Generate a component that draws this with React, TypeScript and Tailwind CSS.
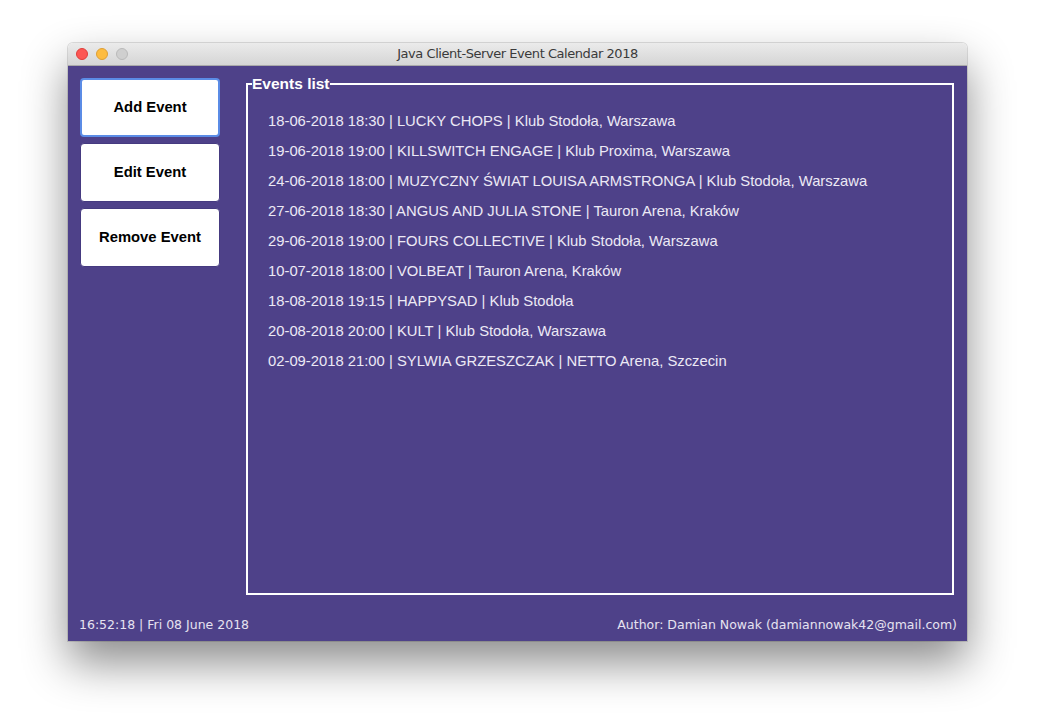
import React from 'react';

// Events shown in the list (static data from the server snapshot)
const events: string[] = [
  '18-06-2018 18:30 | LUCKY CHOPS | Klub Stodoła, Warszawa',
  '19-06-2018 19:00 | KILLSWITCH ENGAGE | Klub Proxima, Warszawa',
  '24-06-2018 18:00 | MUZYCZNY ŚWIAT LOUISA ARMSTRONGA | Klub Stodoła, Warszawa',
  '27-06-2018 18:30 | ANGUS AND JULIA STONE | Tauron Arena, Kraków',
  '29-06-2018 19:00 | FOURS COLLECTIVE | Klub Stodoła, Warszawa',
  '10-07-2018 18:00 | VOLBEAT | Tauron Arena, Kraków',
  '18-08-2018 19:15 | HAPPYSAD | Klub Stodoła',
  '20-08-2018 20:00 | KULT | Klub Stodoła, Warszawa',
  '02-09-2018 21:00 | SYLWIA GRZESZCZAK | NETTO Arena, Szczecin',
];

const buttons = ['Add Event', 'Edit Event', 'Remove Event'];

const App: React.FC = () => {
  return (
    <div className="w-[1039px] h-[719px] bg-white pl-[68px] pt-[43px] font-['Liberation_Sans',Arial,sans-serif]">
      <div className="w-[899px] h-[598px] flex flex-col rounded-t-[5px] overflow-hidden shadow-[0_22px_45px_rgba(0,0,0,0.45),0_0_0_1px_rgba(0,0,0,0.12)]">
        {/* Title bar */}
        <div className="h-[23px] shrink-0 relative flex items-center justify-center bg-gradient-to-b from-[#ebebeb] to-[#d5d5d5] border-b border-[#a9a9a9]">
          <div className="absolute left-[8px] top-[5px] flex gap-[8px]">
            <span className="w-[12px] h-[12px] rounded-full bg-[#fc5753] border border-[#df3e3a]" />
            <span className="w-[12px] h-[12px] rounded-full bg-[#fdbc40] border border-[#de9f34]" />
            <span className="w-[12px] h-[12px] rounded-full bg-[#cfcfcf] border border-[#b9b9b9]" />
          </div>
          <span className="text-[13px] text-[#3a3a3a] font-['DejaVu_Sans',sans-serif] tracking-[-0.45px]">
            Java Client-Server Event Calendar 2018
          </span>
        </div>

        {/* Content */}
        <div className="flex-1 bg-[#4e4189] flex flex-col">
          <div className="flex flex-1 pl-[12px] pr-[13px] pt-[12px]">
            <div className="flex flex-col gap-[6px] w-[140px] shrink-0">
              {buttons.map((label, i) => (
                <button
                  key={label}
                  className={`h-[59px] bg-white rounded-[4px] text-[14.8px] font-bold text-black ${
                    i === 0 ? 'border-2 border-[#5b8ce6]' : 'border border-[#453a80]'
                  }`}
                >
                  {label}
                </button>
              ))}
            </div>

            <fieldset className="ml-[26px] flex-1 h-[520px] -mt-[3px] border-2 border-white pt-[13px]">
              <legend className="ml-[4px] px-0 text-[15.5px] font-bold text-white leading-[18px]">Events list</legend>
              <ul className="flex flex-col pl-[20px]">
                {events.map((ev) => (
                  <li key={ev} className="h-[30px] leading-[30px] text-[14.8px] text-[#ece9f5] whitespace-nowrap">
                    {ev}
                  </li>
                ))}
              </ul>
            </fieldset>
          </div>

          <div className="h-[48px] shrink-0 flex items-center justify-between pl-[11px] pr-[10px] pt-[12px] text-[12.5px] text-[#e6e3f0] font-['DejaVu_Sans',sans-serif]">
            <span>16:52:18 | Fri 08 June 2018</span>
            <span>Author: Damian Nowak (damiannowak42@gmail.com)</span>
          </div>
        </div>
      </div>
    </div>
  );
};

export default App;
